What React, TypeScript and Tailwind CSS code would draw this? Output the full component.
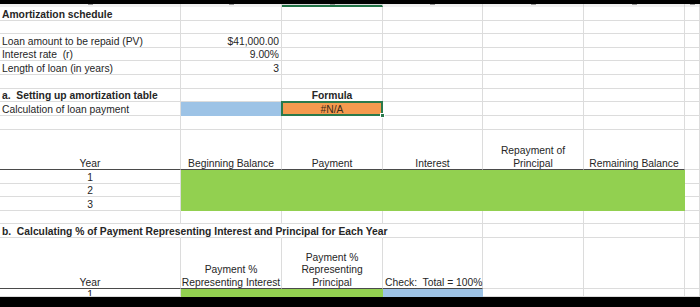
import React from "react";

const W = ["w-[181px]", "w-[101px]", "w-[101px]", "w-[100px]", "w-[101px]", "w-[101px]", "w-[15px]"];

type CellProps = {
  w: string;
  r?: string;
  b?: string;
  className?: string;
  children?: React.ReactNode;
};

function Cell({ w, r = "border-r-[#dcdcdc]", b = "border-b-[#dcdcdc]", className = "", children }: CellProps) {
  return (
    <div className={`${w} ${r} ${b} shrink-0 h-full border-r border-b flex items-end px-[2px] text-[10.3px] leading-[10px] text-[#262626] ${className}`}>
      {children}
    </div>
  );
}

// wrapped header text sits a touch lower than its line box
function Lines({ children }: { children: React.ReactNode }) {
  return <span className="block shrink-0 whitespace-nowrap leading-[12.3px] -mb-[1px] text-center">{children}</span>;
}

function Row({ h, children }: { h: string; children: React.ReactNode }) {
  return <div className={`${h} flex`}>{children}</div>;
}

function Blank({ h }: { h: string }) {
  return (
    <Row h={h}>
      {W.map((w, i) => (
        <Cell key={i} w={w} />
      ))}
    </Row>
  );
}

export default function App() {
  return (
    <div className="w-[700px] h-[307px] overflow-hidden bg-white" style={{ fontFamily: '"Liberation Sans", Arial, sans-serif' }}>
      {/* window chrome + column headers, mostly cut off */}
      <div className="h-[4px] bg-black" />
      <div className="h-[3px] flex bg-[#f0f0f0] overflow-hidden">
        {W.map((w, i) => (
          <div
            key={i}
            className={`${w} shrink-0 h-full border-r border-[#d6d6d6] flex justify-center items-start ${i === 2 ? "bg-[#d9d9d9] border-b-2 border-b-[#217346]" : ""}`}
          >
            <div className="w-[5px] h-[1px] bg-[#9a9a9a]" />
          </div>
        ))}
      </div>

      <Row h="h-[14px]">
        <Cell w={W[0]} className="font-bold text-[#1a1a1a]">Amortization schedule</Cell>
        {W.slice(1).map((w, i) => <Cell key={i} w={w} />)}
      </Row>
      <Blank h="h-[13px]" />
      <Row h="h-[14px]">
        <Cell w={W[0]}>Loan amount to be repaid (PV)</Cell>
        <Cell w={W[1]} className="justify-end">$41,000.00</Cell>
        {W.slice(2).map((w, i) => <Cell key={i} w={w} />)}
      </Row>
      <Row h="h-[13px]">
        <Cell w={W[0]} className="whitespace-pre">Interest rate  (r)</Cell>
        <Cell w={W[1]} className="justify-end">9.00%</Cell>
        {W.slice(2).map((w, i) => <Cell key={i} w={w} />)}
      </Row>
      <Row h="h-[14px]">
        <Cell w={W[0]}>Length of loan (in years)</Cell>
        <Cell w={W[1]} className="justify-end">3</Cell>
        {W.slice(2).map((w, i) => <Cell key={i} w={w} />)}
      </Row>
      <Blank h="h-[14px]" />
      <Row h="h-[13px]">
        <Cell w={W[0]} className="font-bold text-[#1a1a1a] whitespace-pre">a.  Setting up amortization table</Cell>
        <Cell w={W[1]} />
        <Cell w={W[2]} className="justify-center font-bold text-[#1a1a1a]">Formula</Cell>
        {W.slice(3).map((w, i) => <Cell key={i} w={w} />)}
      </Row>
      <Row h="h-[14px]">
        <Cell w={W[0]}>Calculation of loan payment</Cell>
        <Cell w={W[1]} r="border-r-[#9dc3e6]" b="border-b-[#9dc3e6]" className="bg-[#9dc3e6]" />
        <Cell w={W[2]} r="border-r-[#f59a4e]" b="border-b-[#f59a4e]" className="bg-[#f59a4e] justify-center relative">
          <span className="text-[#3a2a1a]">#N/A</span>
          <div className="absolute -left-[1px] -top-[1px] -right-[1px] -bottom-[1px] border-2 border-[#2a7a4c]" />
          <div className="absolute -right-[3px] -bottom-[3px] w-[5px] h-[5px] bg-[#2a7a4c] border border-white" />
        </Cell>
        {W.slice(3).map((w, i) => <Cell key={i} w={w} />)}
      </Row>
      <Blank h="h-[14px]" />

      {/* amortization table header */}
      <Row h="h-[40px]">
        <Cell w={W[0]} b="border-b-[#4a4a4a]" className="justify-center">Year</Cell>
        <Cell w={W[1]} b="border-b-[#4a4a4a]" className="justify-center">Beginning Balance</Cell>
        <Cell w={W[2]} b="border-b-[#4a4a4a]" className="justify-center">Payment</Cell>
        <Cell w={W[3]} b="border-b-[#4a4a4a]" className="justify-center">Interest</Cell>
        <Cell w={W[4]} b="border-b-[#4a4a4a]" className="justify-center">
          <Lines>Repayment of<br />Principal</Lines>
        </Cell>
        <Cell w={W[5]} b="border-b-[#4a4a4a]" className="justify-center">Remaining Balance</Cell>
        <Cell w={W[6]} />
      </Row>
      {[
        ["1", "h-[14px]"],
        ["2", "h-[13px]"],
        ["3", "h-[14px]"],
      ].map(([n, h]) => (
        <Row key={n} h={h}>
          <Cell w={W[0]} className="justify-center">{n}</Cell>
          {W.slice(1, 6).map((w, i) => (
            <Cell key={i} w={w} r="border-r-[#92d050]" b="border-b-[#92d050]" className="bg-[#92d050]" />
          ))}
          <Cell w={W[6]} />
        </Row>
      ))}
      <Blank h="h-[13px]" />

      <Row h="h-[14px]">
        <Cell w={W[0]} r="border-r-transparent" className="font-bold text-[#1a1a1a] whitespace-pre overflow-visible">
          b.  Calculating % of Payment Representing Interest and Principal for Each Year
        </Cell>
        <Cell w={W[1]} r="border-r-transparent" />
        <Cell w={W[2]} r="border-r-transparent" />
        {W.slice(3).map((w, i) => <Cell key={i} w={w} />)}
      </Row>
      <Row h="h-[51px]">
        <Cell w={W[0]} b="border-b-[#4a4a4a]" className="justify-center">Year</Cell>
        <Cell w={W[1]} b="border-b-[#4a4a4a]" className="justify-center px-0">
          <Lines>Payment %<br />Representing Interest</Lines>
        </Cell>
        <Cell w={W[2]} b="border-b-[#4a4a4a]" className="justify-center">
          <Lines>Payment %<br />Representing<br />Principal</Lines>
        </Cell>
        <Cell w={W[3]} b="border-b-[#4a4a4a]" className="whitespace-pre">Check:  Total = 100%</Cell>
        {W.slice(4).map((w, i) => <Cell key={i} w={w} />)}
      </Row>
      <Row h="h-[8px]">
        <Cell w={W[0]} className="justify-center items-start overflow-hidden">
          <span className="leading-[12px]">1</span>
        </Cell>
        <Cell w={W[1]} r="border-r-[#92d050]" b="border-b-[#92d050]" className="bg-[#92d050]" />
        <Cell w={W[2]} r="border-r-[#92d050]" b="border-b-[#92d050]" className="bg-[#92d050]" />
        <Cell w={W[3]} r="border-r-[#9dc3e6]" b="border-b-[#9dc3e6]" className="bg-[#9dc3e6]" />
        {W.slice(4).map((w, i) => <Cell key={i} w={w} />)}
      </Row>
      <div className="h-[10px] bg-black" />
    </div>
  );
}
